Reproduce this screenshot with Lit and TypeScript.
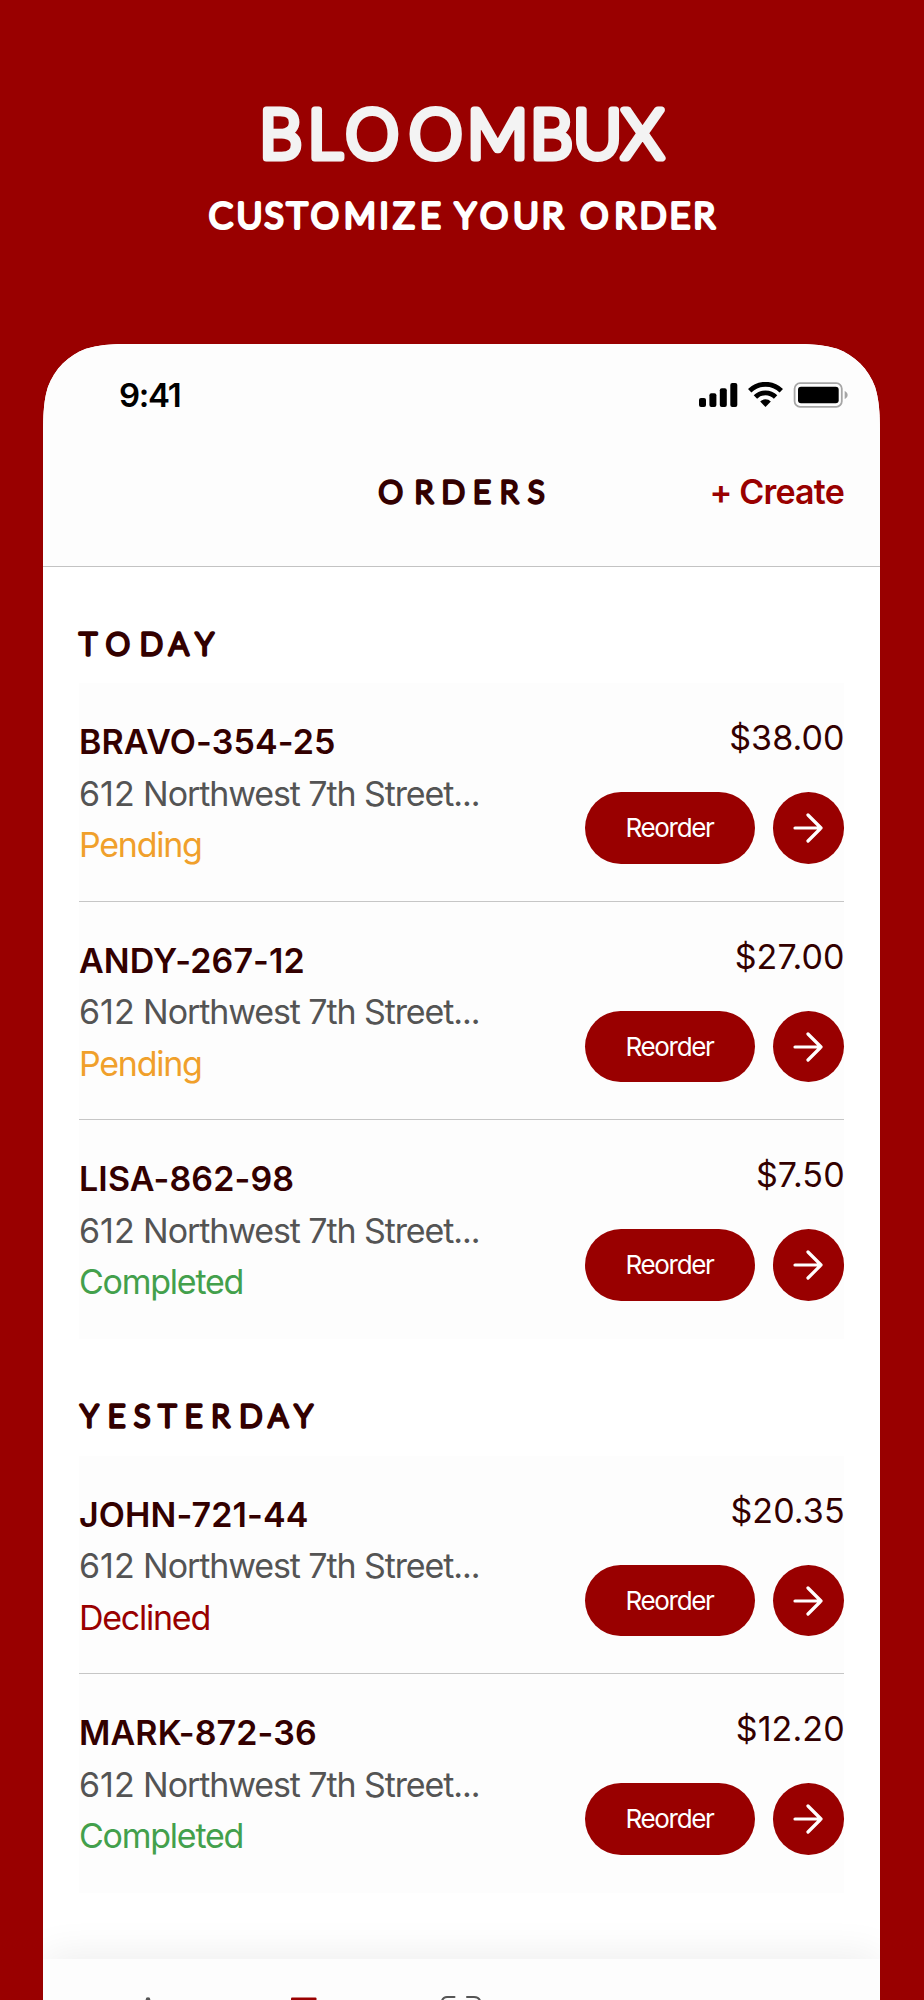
import { LitElement, html, svg, css } from "lit";
import { customElement, property } from "lit/decorators.js";

type Status = "Pending" | "Completed" | "Declined";
interface Order { name: string; status: Status; price: string; }
interface Group { title: string; centers: number[]; orders: Order[]; }

const GROUPS: Group[] = [
  { title: "TODAY", centers: [9.2, 38.8, 72.3, 99.8, 125.6], orders: [
    { name: "BRAVO-354-25", status: "Pending", price: "$38.00" },
    { name: "ANDY-267-12", status: "Pending", price: "$27.00" },
    { name: "LISA-862-98", status: "Completed", price: "$7.50" },
  ] },
  { title: "YESTERDAY", centers: [10.4, 37.6, 63.2, 88.3, 114.6, 141.6, 171.8, 199.3, 224.6], orders: [
    { name: "JOHN-721-44", status: "Declined", price: "$20.35" },
    { name: "MARK-872-36", status: "Completed", price: "$12.20" },
  ] },
];

/** Rounded display lettering: light caps thickened by a round-joined stroke. */
@customElement("display-text")
class DisplayText extends LitElement {
  @property() text = "";
  @property({ attribute: false }) centers: number[] = [];
  @property({ type: Number }) cap = 25;
  @property({ type: Number }) width = 200;
  @property({ type: Number }) weight = 4;
  static styles = css`
    :host { display: block; line-height: 0; }
    svg { display: block; overflow: visible; }
    text { font-family: Lato, "Open Sans", sans-serif; font-weight: 300; fill: currentColor; stroke: currentColor; stroke-linejoin: round; stroke-linecap: round; text-anchor: middle; }
  `;
  render() {
    const size = (this.cap - this.weight) / 0.72;
    return html`<svg width=${this.width} height=${this.cap} role="img" aria-label=${this.text}>
      ${svg`<text x=${this.centers.join(" ")} y=${this.cap - this.weight / 2} font-size=${size} stroke-width=${this.weight}>${this.text}</text>`}
    </svg>`;
  }
}

@customElement("status-bar")
class StatusBar extends LitElement {
  static styles = css`
    :host { display: flex; justify-content: space-between; align-items: center; height: 40px; padding: 31px 31px 0 76px; }
    .time { font: 600 33px/40px Inter, sans-serif; letter-spacing: -1.3px; color: #000; }
    svg { display: block; }
  `;
  render() {
    return html`<span class="time">9:41</span>
      <svg width="150" height="26" viewBox="0 0 150 26">
        <rect x="0" y="16" width="7" height="9" rx="2"/>
        <rect x="10.4" y="11.3" width="7" height="13.7" rx="2"/>
        <rect x="20.8" y="6.3" width="7" height="18.7" rx="2"/>
        <rect x="31.3" y="1" width="7" height="24" rx="2"/>
        <g fill="none" stroke="#000" stroke-width="4.8">
          <path d="M50.7 8.7 A22.6 22.6 0 0 1 82.3 8.7"/>
          <path d="M56.4 15 A14.2 14.2 0 0 1 76.6 15"/>
        </g>
        <path d="M66.5 25 L61.2 19.6 A7.4 7.4 0 0 1 71.8 19.6 Z"/>
        <rect x="95.6" y="1.2" width="47.2" height="23.6" rx="5.5" fill="none" stroke="#a6a6a6" stroke-width="1.8"/>
        <rect x="99" y="4.7" width="40.7" height="16.6" rx="3"/>
        <path d="M145.7 9 C149.6 10.7 149.6 15.3 145.7 17 Z" fill="#a6a6a6"/>
      </svg>`;
  }
}

@customElement("order-row")
class OrderRow extends LitElement {
  @property({ attribute: false }) order!: Order;
  static styles = css`
    :host { display: flex; justify-content: space-between; box-sizing: border-box; height: 218.6px; background: #fdfdfd; font: 400 34px/51.6px Inter, sans-serif; color: #330000; border-bottom: 1px solid #c6c6c6; }
    :host(.last) { border-bottom-color: transparent; background-clip: border-box; }
    .info { padding-top: 33px; white-space: nowrap; }
    .name { font-weight: 600; letter-spacing: 0.12px; }
    .address { color: #545454; letter-spacing: -1.1px; }
    .number { letter-spacing: 0; }
    .status { letter-spacing: -1.25px; }
    .Pending { color: #f0a02b; }
    .Completed { color: #43a04c; }
    .Declined { color: #990000; }
    .side { display: flex; flex-direction: column; align-items: flex-end; padding-top: 29.3px; }
    .price { letter-spacing: 0.1px; margin-right: -0.7px; }
    .actions { display: flex; gap: 18px; margin-top: 28.3px; }
    .reorder, .go { display: flex; align-items: center; justify-content: center; height: 71.5px; padding: 0; border: 0; border-radius: 36px; background: #990000; color: #fff; }
    .reorder { width: 170px; font: 400 26px/30px Inter, sans-serif; letter-spacing: -1.3px; }
    .go { width: 71.5px; }
  `;
  render() {
    const o = this.order;
    return html`
      <div class="info">
        <div class="name">${o.name}</div>
        <div class="address"><span class="number">612</span> Northwest 7th Street...</div>
        <div class="status ${o.status}">${o.status}</div>
      </div>
      <div class="side">
        <div class="price">${o.price}</div>
        <div class="actions">
          <button class="reorder">Reorder</button>
          <button class="go" aria-label="Open">
            <svg width="30" height="30" viewBox="0 0 30 30" fill="none" stroke="#fff" stroke-width="3.2" stroke-linecap="round" stroke-linejoin="round"><path d="M2 15H28M15 2L28 15L15 28"/></svg>
          </button>
        </div>
      </div>`;
  }
}

@customElement("app-root")
class AppRoot extends LitElement {
  static styles = css`
    :host { display: block; box-sizing: border-box; width: 924px; height: 2000px; overflow: hidden; background: #990000; }
    .promo { height: 343.7px; box-sizing: border-box; padding-top: 106px; }
    .brand { color: #f3f3f3; }
    .tagline { color: #fff; margin-top: 40px; }
    .phone { width: 837px; height: 1656.3px; margin-left: 43px; background: #fff; display: flex; flex-direction: column;
      clip-path: path("M104 0 C74 0 59.1 0 42.9 5.1 C25.4 11.5 11.5 25.4 5.1 42.9 C0 59.1 0 74 0 104 V1657 H837 V104 C837 74 837 59.1 831.9 42.9 C825.5 25.4 811.5 11.5 794.1 5.1 C777.9 0 763 0 733 0 Z"); }
    .top { height: 222px; background: #fdfdfd; border-bottom: 1.2px solid #c3c3c3; flex: none; }
    .nav { display: grid; grid-template-columns: 1fr auto 1fr; align-items: center; height: 50px; padding: 52.3px 36px 0 36px; color: #330000; }
    .create { grid-column: 3; justify-self: end; font: 600 34px/50px Inter, sans-serif; letter-spacing: -0.8px; color: #990000; }
    .title { grid-column: 2; }
    .list { flex: 1; padding: 64px 36px 0; color: #330000; }
    .card { margin: 27px 0 64.5px; }
    .tabs { flex: none; height: 40.5px; background: #fdfdfd; box-shadow: 0 0 44px rgba(0,0,0,.09); }
    .tabs svg { display: block; }
  `;
  render() {
    return html`
      <header class="promo">
        <display-text class="brand" text="BLOOMBUX" .centers=${[280.6, 325, 372.2, 435.6, 497.6, 551.4, 597.6, 642.6]} cap="55.3" width="924" weight="7.2"></display-text>
        <display-text class="tagline" text="CUSTOMIZE YOUR ORDER" .centers=${[220.8, 249.4, 274.2, 297.1, 324.8, 360, 384.1, 404, 430.3, 448, 465.4, 494.1, 526.1, 552.6, 573, 594.3, 625, 653, 679.8, 704.2]} cap="29.3" width="924" weight="4.1"></display-text>
      </header>
      <main class="phone">
        <div class="top">
          <status-bar></status-bar>
          <div class="nav">
            <display-text class="title" text="ORDERS" .centers=${[13.8, 46.8, 76.3, 105, 132.2, 159.3]} cap="25.5" width="170" weight="3.3"></display-text>
            <span class="create">+ Create</span>
          </div>
        </div>
        <div class="list">
          ${GROUPS.map((g) => html`
            <section>
              <display-text text=${g.title} .centers=${g.centers} cap="25.3" width="300" weight="3.3"></display-text>
              <div class="card">${g.orders.map((o, i) => html`<order-row class=${i === g.orders.length - 1 ? "last" : ""} .order=${o}></order-row>`)}</div>
            </section>`)}
        </div>
        <nav class="tabs">
          <svg width="837" height="41" viewBox="43 1959.5 837 41" fill="none" stroke-linecap="round">
            <circle cx="148" cy="2000" r="2.3" fill="#555"/>
            <rect x="291" y="1998" width="25.5" height="8" rx="1" fill="#990000"/>
            <path d="M442 2001 Q443.5 1997.5 447 1997.5 H454.5 M467 1997.5 H474 Q478.5 1997.5 480 2001" stroke="#555" stroke-width="2"/>
          </svg>
        </nav>
      </main>`;
  }
}
